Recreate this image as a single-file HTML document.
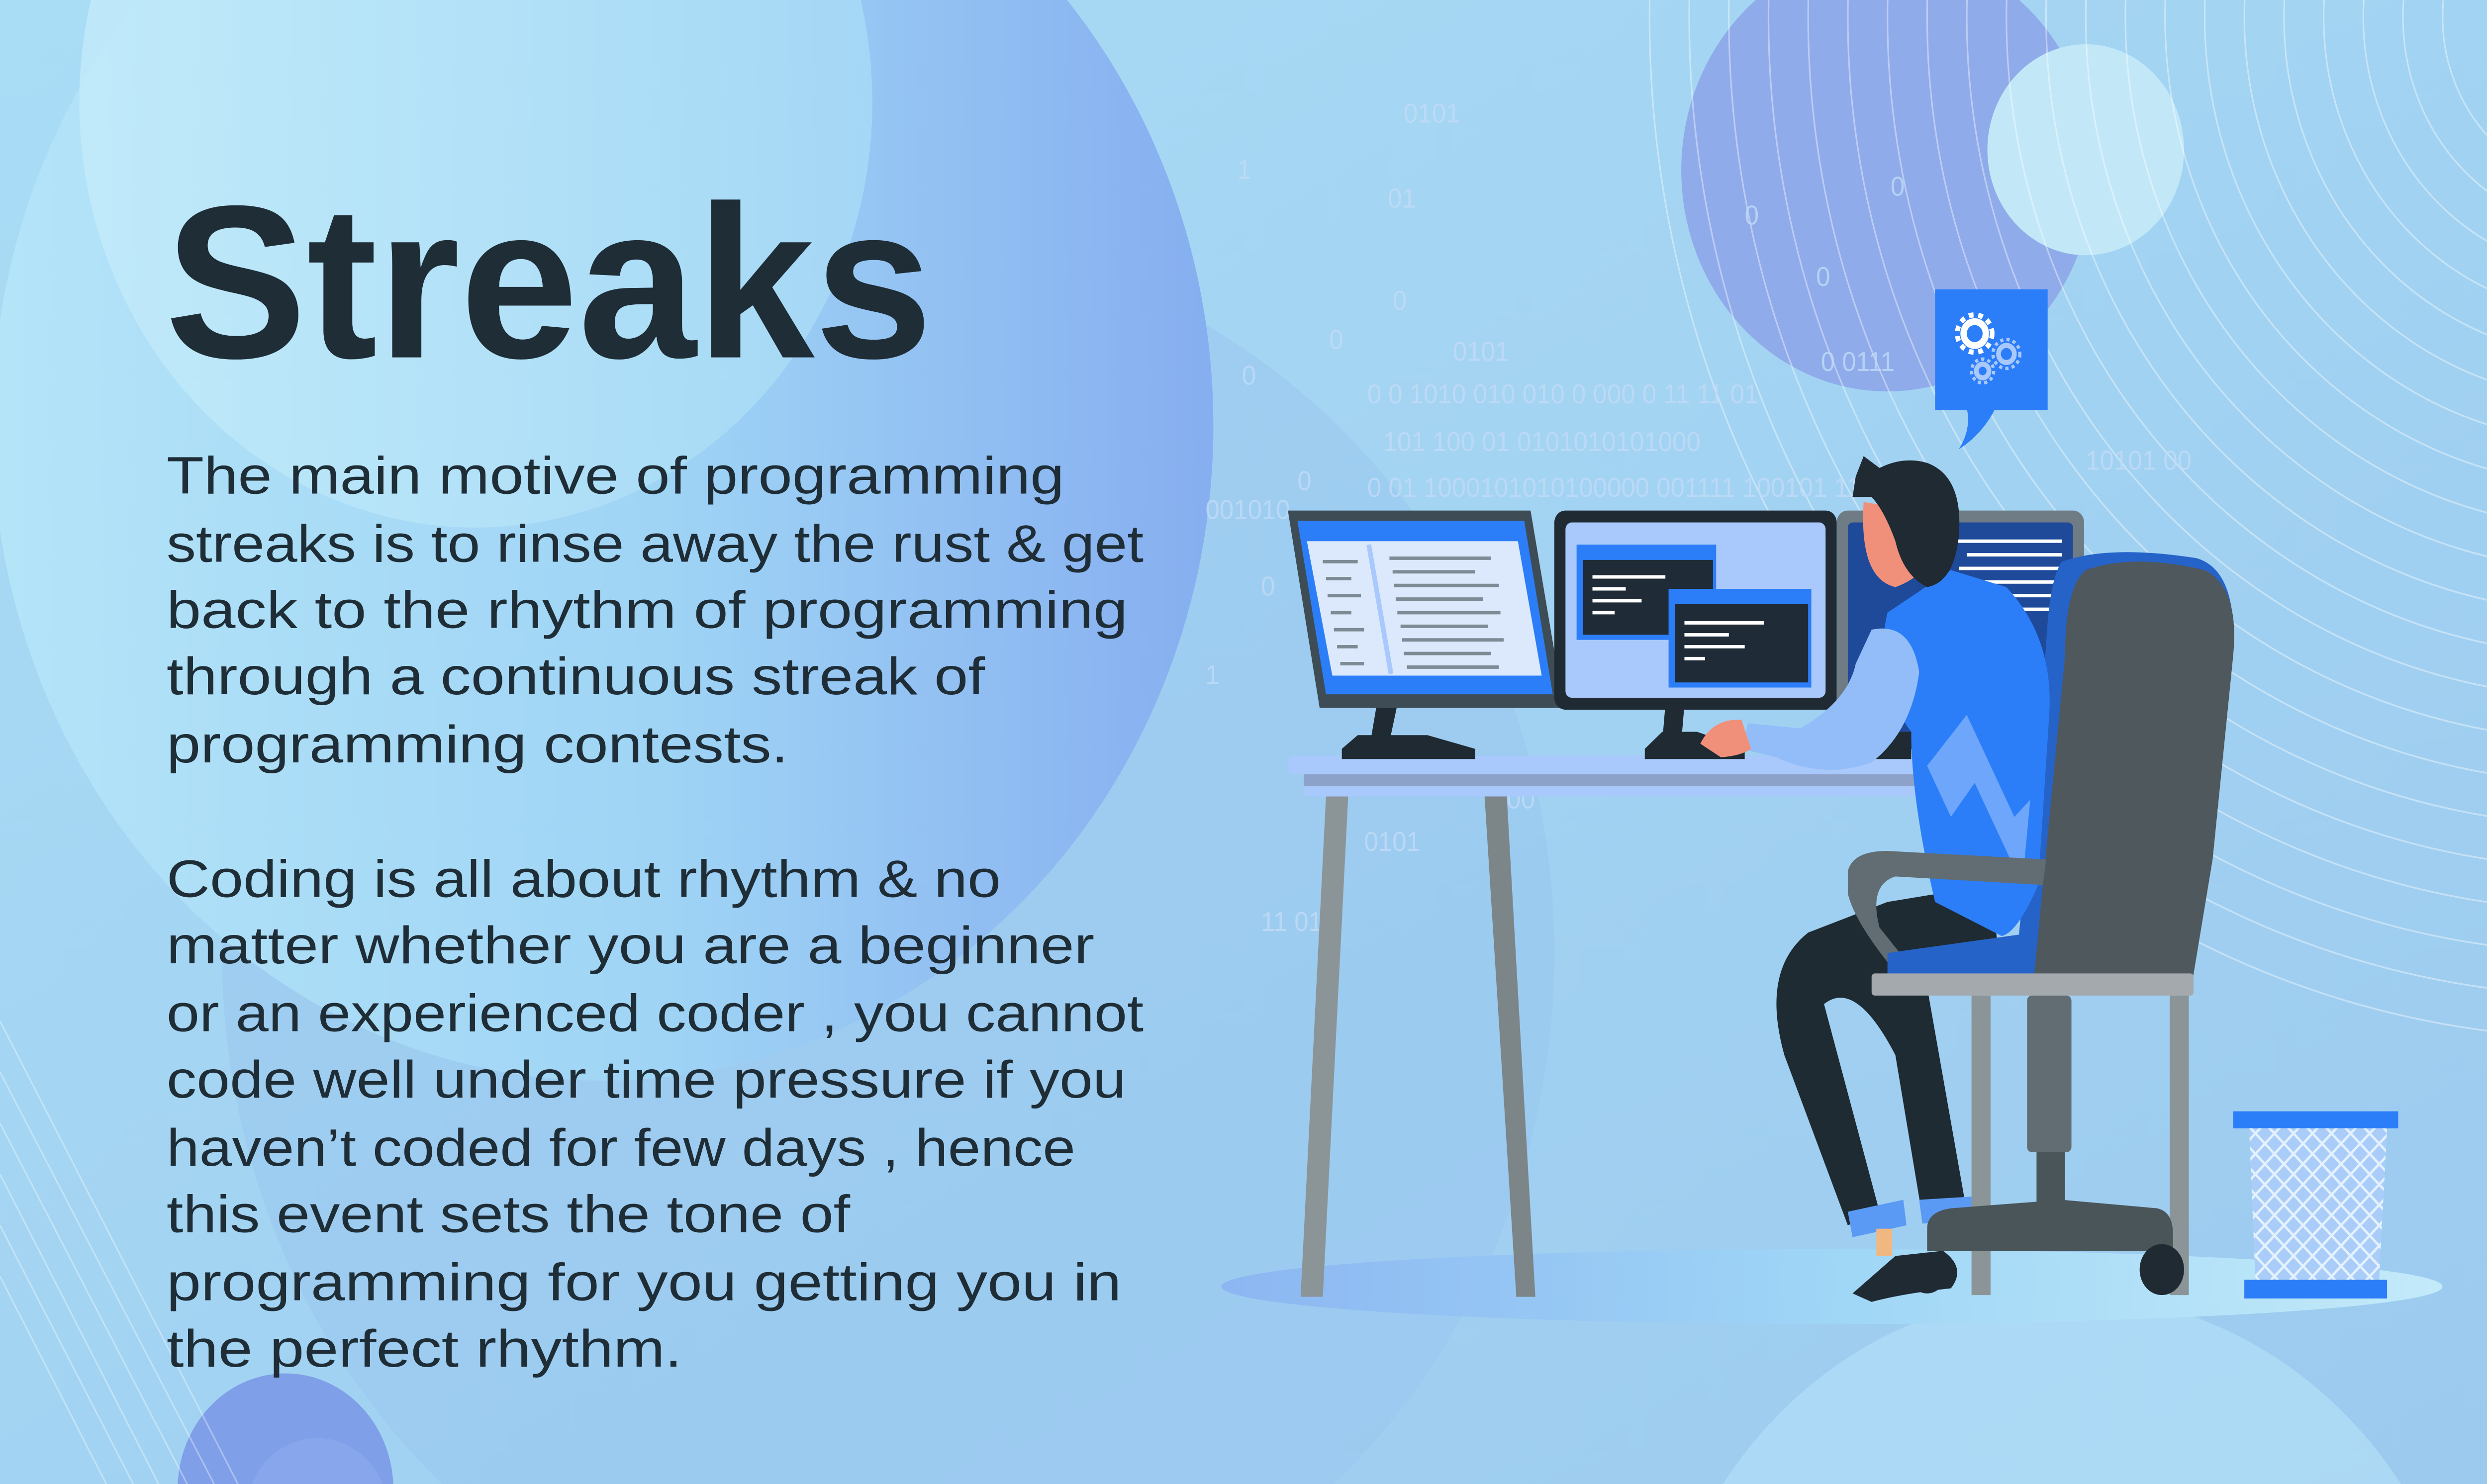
<!DOCTYPE html>
<html><head><meta charset="utf-8">
<style>
html,body{margin:0;padding:0;background:#a3d0ef;width:100%;height:100%;overflow:hidden;}
svg{display:block;position:fixed;left:0;top:0;width:100vw;height:100vh;}
</style></head>
<body>
<svg viewBox="0 0 1568 872" preserveAspectRatio="none" xmlns="http://www.w3.org/2000/svg">
<defs>
<linearGradient id="bg" x1="0" y1="0" x2="1" y2="1">
<stop offset="0" stop-color="#a9dcf5"/><stop offset="1" stop-color="#9ccaef"/>
</linearGradient>
<linearGradient id="c1" x1="0" y1="0" x2="1" y2="0">
<stop offset="0" stop-color="#b4e4f8"/><stop offset="0.55" stop-color="#9fd4f5"/><stop offset="1" stop-color="#86aef0"/>
</linearGradient>
<linearGradient id="c2" x1="0" y1="0" x2="1" y2="0">
<stop offset="0" stop-color="#c4ecfa"/><stop offset="1" stop-color="#a8dbf6"/>
</linearGradient>
<linearGradient id="fl" x1="0" y1="0" x2="1" y2="0">
<stop offset="0" stop-color="#8cb6f2"/><stop offset="0.5" stop-color="#9fd6f6"/><stop offset="1" stop-color="#c3eaf9"/>
</linearGradient>
<pattern id="mesh" width="12" height="12" patternUnits="userSpaceOnUse">
<rect width="12" height="12" fill="#a9cdf8"/>
<path d="M0 0L12 12M12 0L0 12" stroke="#e4f1fe" stroke-width="1.5"/>
</pattern>
<clipPath id="arcclip"><rect x="1000" y="0" width="568" height="872"/></clipPath>
</defs>
<rect width="1568" height="872" fill="url(#bg)"/>
<circle cx="560" cy="560" r="420" fill="#99c6ee" opacity="0.55"/>
<circle cx="1300" cy="1020" r="260" fill="#b2def6" opacity="0.7"/>
<circle cx="380" cy="250" r="385" fill="url(#c1)"/>
<circle cx="300" cy="60" r="250" fill="url(#c2)" opacity="0.8"/>
<circle cx="1190" cy="100" r="130" fill="#8fabea"/>
<circle cx="1315" cy="88" r="62" fill="#c2e8f8"/>
<circle cx="180" cy="875" r="68" fill="#7f9fe8"/>
<circle cx="200" cy="890" r="45" fill="#8aa8ec" opacity="0.8"/>
<g clip-path="url(#arcclip)" fill="none" stroke="#ffffff" stroke-opacity="0.4" stroke-width="1">
<circle cx="1640" cy="10" r="100"/><circle cx="1640" cy="10" r="125"/><circle cx="1640" cy="10" r="150"/>
<circle cx="1640" cy="10" r="175"/><circle cx="1640" cy="10" r="200"/><circle cx="1640" cy="10" r="225"/>
<circle cx="1640" cy="10" r="250"/><circle cx="1640" cy="10" r="275"/><circle cx="1640" cy="10" r="300"/>
<circle cx="1640" cy="10" r="325"/><circle cx="1640" cy="10" r="350"/><circle cx="1640" cy="10" r="375"/>
<circle cx="1640" cy="10" r="400"/><circle cx="1640" cy="10" r="425"/><circle cx="1640" cy="10" r="450"/>
<circle cx="1640" cy="10" r="475"/><circle cx="1640" cy="10" r="500"/><circle cx="1640" cy="10" r="525"/>
<circle cx="1640" cy="10" r="550"/><circle cx="1640" cy="10" r="575"/><circle cx="1640" cy="10" r="600"/>
</g>
<g stroke="#ffffff" stroke-opacity="0.35" stroke-width="1">
<line x1="0" y1="600" x2="150" y2="872"/><line x1="0" y1="630" x2="135" y2="872"/>
<line x1="0" y1="660" x2="118" y2="872"/><line x1="0" y1="690" x2="100" y2="872"/>
<line x1="0" y1="720" x2="84" y2="872"/><line x1="0" y1="750" x2="67" y2="872"/>
</g>
<g font-family="Liberation Sans Narrow, Liberation Sans, sans-serif" font-size="16" fill="#c2dbf7" opacity="0.8">
<text x="885" y="72">0101</text><text x="875" y="122">01</text><text x="780" y="105">1</text>
<text x="878" y="182">0</text><text x="838" y="205">0</text><text x="916" y="212">0101</text>
<text x="862" y="237">0 0  1010 010 010 0  000  0  11 11  01</text>
<text x="872" y="265">101  100   01    0101010101000</text>
<text x="760" y="305">001010</text><text x="818" y="288">0</text>
<text x="862" y="292">0 01  1000101010100000  001111  100101  110</text>
<text x="1100" y="132">0</text><text x="1192" y="115">0</text><text x="1145" y="168">0</text>
<text x="1148" y="218">0 0111</text><text x="1315" y="276">10101 00</text><text x="783" y="226">0</text>
<text x="795" y="350">0</text><text x="860" y="500">0101</text><text x="795" y="547">11 01</text>
<text x="950" y="475">00</text><text x="760" y="402">1</text>
</g>
<ellipse cx="1155" cy="756" rx="385" ry="22" fill="url(#fl)"/>
<rect x="812" y="444" width="400" height="11" rx="4" fill="#a9c8fb"/>
<rect x="822" y="455" width="390" height="7" fill="#8da2c9"/>
<rect x="822" y="462" width="390" height="6" fill="#a9c8fb"/>
<polygon points="836,468 850,468 834,762 820,762" fill="#8b9598"/>
<polygon points="936,468 950,468 968,762 956,762" fill="#7c8588"/>
<polygon points="868,414 881,414 876,436 864,436" fill="#1f2a33"/>
<polygon points="856,432 900,432 930,440 930,446 846,446 846,440" fill="#1f2a33"/>
<polygon points="812,300 965,300 986,416 832,416" fill="#3e4c55"/>
<polygon points="818,306 961,306 979,408 836,408" fill="#2c7ef8"/>
<polygon points="824,318 957,318 972,397 840,397" fill="#dce9fd"/>
<line x1="863" y1="320" x2="877" y2="396" stroke="#a9c8fb" stroke-width="3"/>
<g stroke="#7e8a94" stroke-width="2">
<line x1="834" y1="330" x2="856" y2="330"/><line x1="836" y1="340" x2="852" y2="340"/><line x1="837" y1="350" x2="858" y2="350"/>
<line x1="839" y1="360" x2="852" y2="360"/><line x1="841" y1="370" x2="860" y2="370"/><line x1="843" y1="380" x2="856" y2="380"/>
<line x1="845" y1="390" x2="860" y2="390"/>
<line x1="876" y1="328" x2="940" y2="328"/><line x1="878" y1="336" x2="930" y2="336"/><line x1="879" y1="344" x2="945" y2="344"/>
<line x1="880" y1="352" x2="935" y2="352"/><line x1="881" y1="360" x2="946" y2="360"/><line x1="883" y1="368" x2="938" y2="368"/>
<line x1="884" y1="376" x2="948" y2="376"/><line x1="885" y1="384" x2="940" y2="384"/><line x1="887" y1="392" x2="945" y2="392"/>
</g>
<polygon points="1050,414 1062,414 1060,436 1048,436" fill="#1f2a33"/>
<polygon points="1048,430 1070,430 1100,440 1100,446 1037,446 1037,440" fill="#1f2a33"/>
<rect x="980" y="300" width="178" height="117" rx="7" fill="#1f2a33"/>
<rect x="987" y="307" width="164" height="103" rx="4" fill="#a9c8fb"/>
<rect x="994" y="320" width="88" height="56" fill="#2c7ef8"/>
<rect x="998" y="329" width="82" height="44" fill="#1f2b36"/>
<rect x="1052" y="346" width="90" height="58" fill="#2c7ef8"/>
<rect x="1056" y="355" width="84" height="46" fill="#1f2b36"/>
<g stroke="#fff" stroke-width="2">
<line x1="1004" y1="339" x2="1050" y2="339"/><line x1="1004" y1="346" x2="1025" y2="346"/><line x1="1004" y1="353" x2="1035" y2="353"/><line x1="1004" y1="360" x2="1018" y2="360"/>
<line x1="1062" y1="366" x2="1112" y2="366"/><line x1="1062" y1="373" x2="1090" y2="373"/><line x1="1062" y1="380" x2="1100" y2="380"/><line x1="1062" y1="387" x2="1075" y2="387"/>
</g>
<rect x="1158" y="300" width="156" height="140" rx="7" fill="#6f7c85"/>
<rect x="1165" y="307" width="142" height="133" rx="3" fill="#1f4a9a"/>
<g stroke="#fff" stroke-width="2">
<line x1="1230" y1="318" x2="1300" y2="318"/><line x1="1240" y1="326" x2="1300" y2="326"/><line x1="1235" y1="334" x2="1300" y2="334"/><line x1="1250" y1="342" x2="1300" y2="342"/>
<line x1="1250" y1="350" x2="1300" y2="350"/><line x1="1260" y1="358" x2="1300" y2="358"/>
</g>
<polygon points="1175,430 1205,430 1205,446 1160,446" fill="#1f2a33"/>
<path d="M1300,330 Q1330,320 1385,328 Q1410,335 1408,380 L1395,500 L1380,578 L1270,578 L1290,380 Q1292,340 1300,330Z" fill="#2563c8"/>
<path d="M1315,335 Q1345,325 1390,335 Q1412,345 1408,385 L1395,505 L1382,578 L1282,578 L1302,385 Q1302,345 1315,335Z" fill="#4f585d"/>
<path d="M1190,530 L1255,520 L1262,575 L1215,580 L1240,712 L1212,715 L1195,620 Q1170,575 1150,590 L1185,712 L1165,720 L1125,620 Q1110,570 1140,548Z" fill="#1f2b33"/>
<polygon points="1165,712 1200,705 1202,720 1168,727" fill="#5a9af5"/>
<polygon points="1210,705 1245,703 1245,717 1212,719" fill="#5a9af5"/>
<rect x="1183" y="722" width="10" height="16" fill="#f0b880"/>
<path d="M1168,760 L1195,738 L1225,735 Q1240,745 1230,757 Q1200,760 1180,765Z" fill="#1f2a33"/>
<circle cx="1215" cy="748" r="12" fill="#1f2a33"/>
<path d="M1190,360 L1230,335 L1265,345 Q1295,375 1292,420 L1285,520 Q1272,548 1262,550 L1220,530 Q1205,470 1205,430 Q1180,400 1190,360Z" fill="#2c7ef8"/>
<path d="M1215,450 L1240,420 L1270,480 L1280,470 L1275,520 L1245,460 L1230,480Z" fill="#6da6fa"/>
<path d="M1180,370 Q1205,365 1210,395 Q1205,430 1180,448 Q1150,458 1120,445 L1098,440 L1102,425 L1135,428 Q1165,412 1170,390Z" fill="#93bdf8"/>
<path d="M1098,423 Q1080,422 1072,437 L1085,445 Q1098,444 1104,440Z" fill="#f0907a"/>
<path d="M1175,295 Q1172,340 1195,345 Q1210,340 1215,330 L1228,325 L1210,300Z" fill="#f0907a"/>
<path d="M1170,280 L1175,268 L1185,275 Q1200,268 1215,272 Q1238,280 1235,315 Q1232,342 1215,345 Q1200,338 1195,318 Q1188,300 1180,292 L1168,292Z" fill="#1f2a33"/>
<ellipse cx="1188" cy="318" rx="4" ry="6" fill="#f0907a"/>
<path d="M1165,512 Q1168,500 1190,500 L1290,505 L1288,520 L1195,515 Q1178,520 1185,545 L1215,580 L1205,582 Q1170,545 1165,525Z" fill="#626d73"/>
<path d="M1190,560 L1282,548 L1275,575 L1190,575Z" fill="#2563c8"/>
<rect x="1180" y="572" width="203" height="13" rx="2" fill="#a3a9ac"/>
<rect x="1243" y="585" width="12" height="176" fill="#8b9598"/>
<rect x="1368" y="585" width="12" height="176" fill="#8b9598"/>
<rect x="1278" y="585" width="28" height="92" rx="3" fill="#626d73"/>
<rect x="1284" y="677" width="18" height="40" fill="#4a555a"/>
<path d="M1215,722 Q1215,712 1230,710 L1300,705 L1360,710 Q1370,712 1370,725 L1370,735 L1215,735Z" fill="#4a555a"/>
<ellipse cx="1363" cy="746" rx="14" ry="15" fill="#1f2a33"/>
<rect x="1408" y="653" width="104" height="10" fill="#2c7ef8"/>
<polygon points="1418,663 1505,663 1500,752 1422,752" fill="url(#mesh)"/>
<rect x="1415" y="752" width="90" height="11" fill="#2c7ef8"/>
<rect x="1220" y="170" width="71" height="71" fill="#2c7ef8"/>
<path d="M1240,240 L1258,240 Q1250,255 1235,264 Q1243,252 1240,240Z" fill="#2c7ef8"/>
<circle cx="1245" cy="196" r="7" fill="none" stroke="#fff" stroke-width="4"/>
<circle cx="1245" cy="196" r="11" fill="none" stroke="#fff" stroke-width="3" stroke-dasharray="3 3"/>
<g fill="none" stroke="#a9c8fb" stroke-width="3"><circle cx="1265" cy="208" r="5"/><circle cx="1250" cy="218" r="4"/></g>
<g fill="none" stroke="#a9c8fb" stroke-width="2" stroke-dasharray="2 2"><circle cx="1265" cy="208" r="8.5"/><circle cx="1250" cy="218" r="7"/></g>
<g fill="#1f2d36" font-family="Liberation Sans, sans-serif">
<text x="104" y="210" font-size="128" font-weight="bold" textLength="484" lengthAdjust="spacingAndGlyphs">Streaks</text>
<g font-size="31">
<text x="105" y="290" textLength="566" lengthAdjust="spacingAndGlyphs">The main motive of programming</text>
<text x="105" y="330" textLength="616" lengthAdjust="spacingAndGlyphs">streaks is to rinse away the rust &amp; get</text>
<text x="105" y="369" textLength="606" lengthAdjust="spacingAndGlyphs">back to the rhythm of programming</text>
<text x="105" y="408" textLength="516" lengthAdjust="spacingAndGlyphs">through a continuous streak of</text>
<text x="105" y="448" textLength="392" lengthAdjust="spacingAndGlyphs">programming contests.</text>
<text x="105" y="527" textLength="526" lengthAdjust="spacingAndGlyphs">Coding is all about rhythm &amp; no</text>
<text x="105" y="566" textLength="585" lengthAdjust="spacingAndGlyphs">matter whether you are a beginner</text>
<text x="105" y="606" textLength="616" lengthAdjust="spacingAndGlyphs">or an experienced coder , you cannot</text>
<text x="105" y="645" textLength="605" lengthAdjust="spacingAndGlyphs">code well under time pressure if you</text>
<text x="105" y="685" textLength="573" lengthAdjust="spacingAndGlyphs">haven’t coded for few days , hence</text>
<text x="105" y="724" textLength="431" lengthAdjust="spacingAndGlyphs">this event sets the tone of</text>
<text x="105" y="764" textLength="602" lengthAdjust="spacingAndGlyphs">programming for you getting you in</text>
<text x="105" y="803" textLength="325" lengthAdjust="spacingAndGlyphs">the perfect rhythm.</text>
</g>
</g>
</svg>
</body></html>
